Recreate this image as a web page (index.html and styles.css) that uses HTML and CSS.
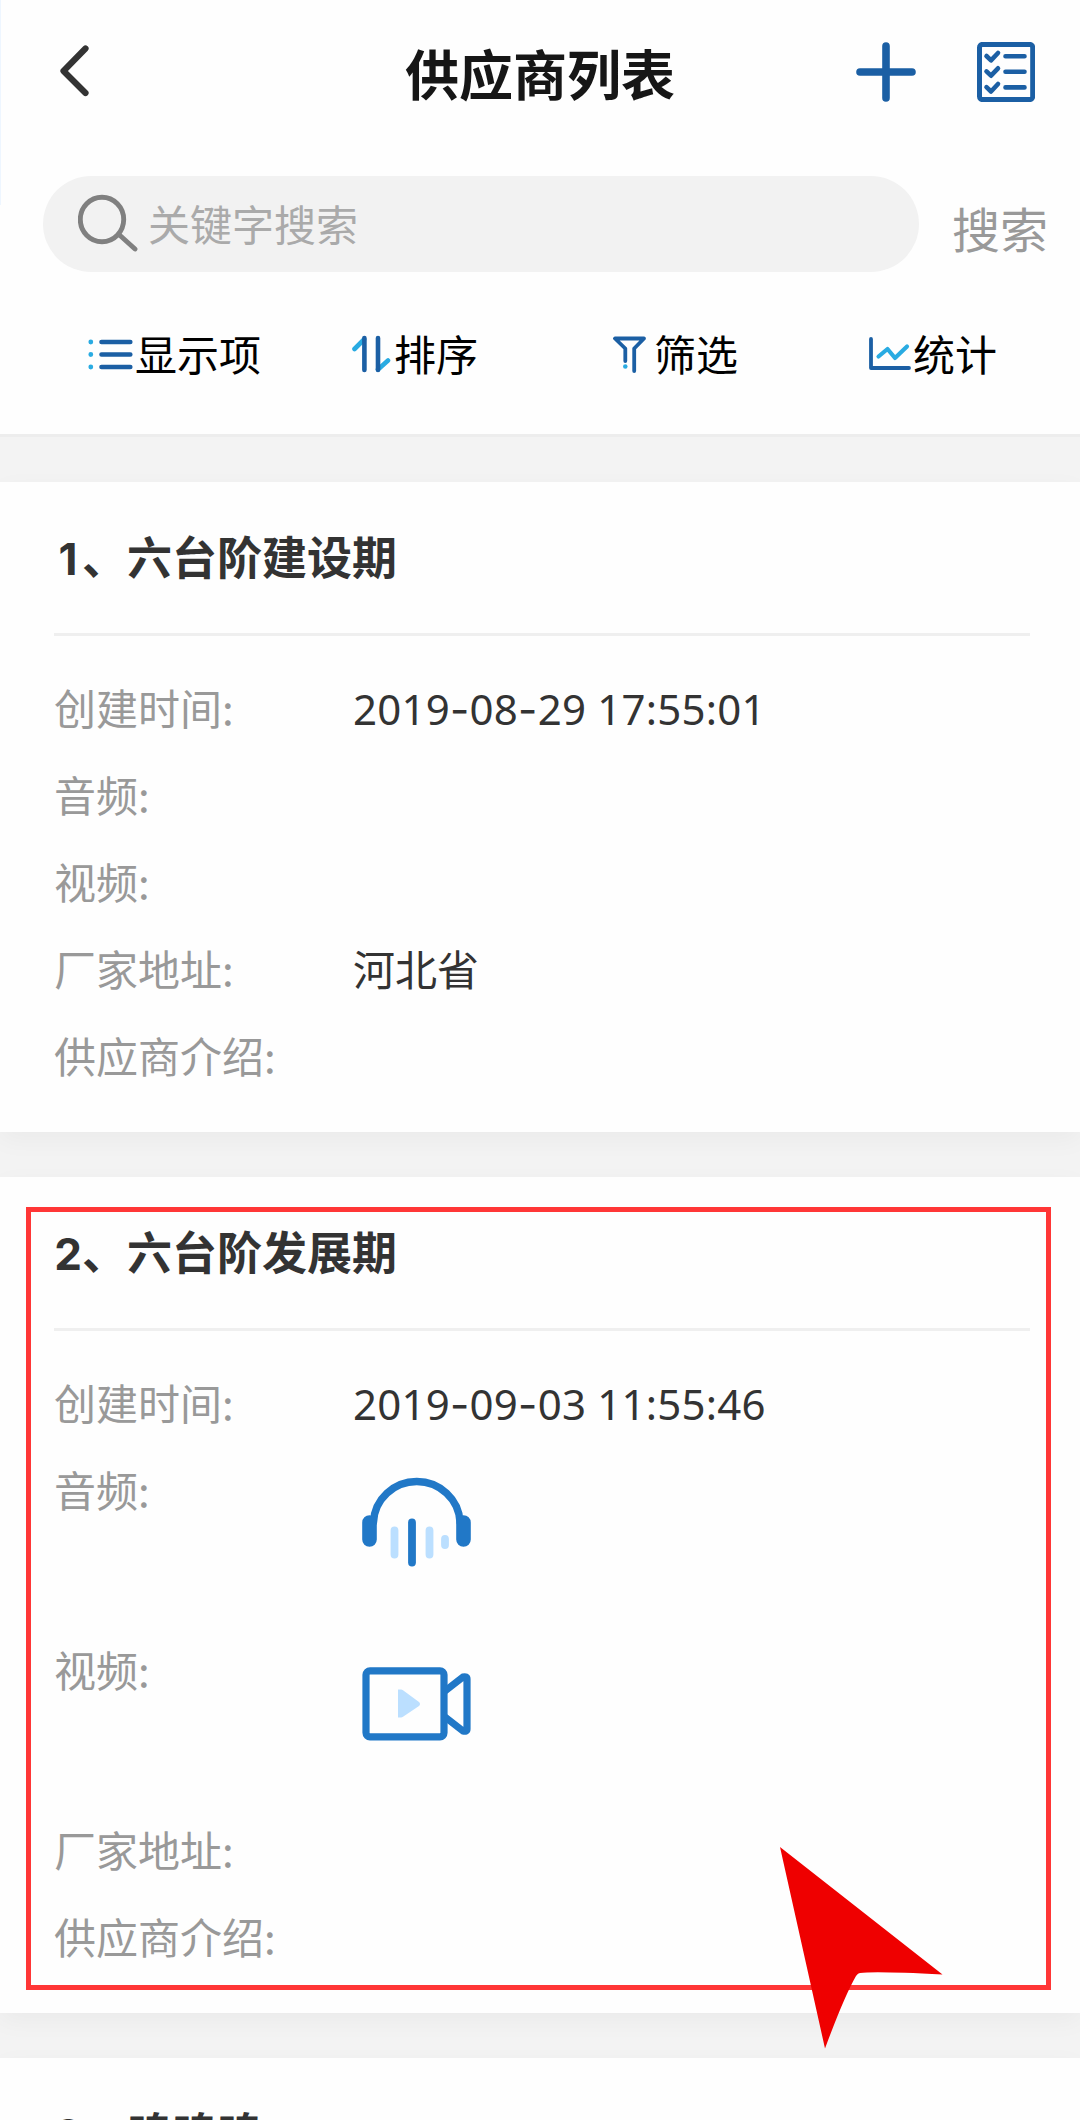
FILE: index.html
```html
<!DOCTYPE html>
<html lang="zh-CN">
<head>
<meta charset="utf-8">
<title>供应商列表</title>
<link rel="stylesheet" href="styles.css">
</head>
<body>
<div class="app">
  <header class="top">
    <div class="navbar">
      <svg class="icon-back" viewBox="0 0 30 52" fill="none" stroke="#333" stroke-width="6.2" stroke-linecap="round" stroke-linejoin="round"><path d="M26.500 3.500 4.500 26 26.500 48"/></svg>
      <h1 class="title">供应商列表</h1>
      <div class="actions">
        <svg class="icon-add" viewBox="0 0 60 60" stroke="#1b5fa4" stroke-width="7.6" stroke-linecap="round"><path d="M4 30H56M30 4V56"/></svg>
        <svg class="icon-list" viewBox="0 0 58 60" fill="none" stroke="#1b5fa4" stroke-width="4.600" stroke-linecap="round" stroke-linejoin="round"><rect x="2.500" y="2.400" width="53.2" height="55.2" rx="3" stroke-width="5"/><path d="M28.500 14.300H47.500M28.500 29.700H47.500M28.500 45.400H47.500"/><path d="M9.500 14 14 18.300 21 11M9.500 29.400 14 33.700 21 26.300M9.500 45.200 14 49.500 21 42"/></svg>
      </div>
    </div>
    <div class="search">
      <div class="search-box">
        <svg class="icon-search" viewBox="0 0 60 60" fill="none" stroke="#808080" stroke-width="4.900" stroke-linecap="round"><ellipse cx="24" cy="25.500" rx="21.700" ry="22.200"/><path d="M41.500 41 57 55"/></svg>
        <span class="placeholder">关键字搜索</span>
      </div>
      <span class="search-btn">搜索</span>
    </div>
    <nav class="tabs">
      <div class="tab tab-fields">
        <svg width="45" height="38" viewBox="0 0 45 38" stroke-width="4.600" stroke-linecap="round"><path stroke="#1b5fa4" d="M13.500 7H42.300M13.500 19.500H42.300M13.500 32H42.300"/><path stroke="#29abe2" stroke-width="4.800" d="M2.800 7h.01M2.800 19.500h.01M2.800 32h.01"/></svg>
        <span>显示项</span>
      </div>
      <div class="tab tab-sort">
        <svg width="39" height="38" viewBox="0 0 39 38" fill="none" stroke-width="4.600" stroke-linecap="round"><path stroke="#29abe2" d="M2.500 14 12 4.500M26 34.500 36 25.500"/><path stroke="#1b5fa4" d="M12.400 3V35M26 3V35"/></svg>
        <span>排序</span>
      </div>
      <div class="tab tab-filter">
        <svg width="34" height="38" viewBox="0 0 34 38" fill="none" stroke-width="3.800" stroke-linecap="round" stroke-linejoin="round"><path stroke="#1b5fa4" d="M12.300 26V13.500L2 3.500H31L21.200 13.500V36"/><path stroke="#29abe2" stroke-width="4.500" d="M12.300 31.500h.01"/></svg>
        <span>筛选</span>
      </div>
      <div class="tab tab-stats">
        <svg width="43" height="38" viewBox="0 0 43 38" fill="none" stroke-width="3.800" stroke-linecap="round" stroke-linejoin="round"><path stroke="#1b5fa4" d="M2 4V33H40"/><path stroke="#29abe2" stroke-width="4.200" d="M9.500 21.500 18.500 14 26 23 38 11.500"/></svg>
        <span>统计</span>
      </div>
    </nav>
  </header>

  <main class="list">
    <section class="card">
      <h2 class="card-title"><span class="num">1</span>、六台阶建设期</h2>
      <dl class="fields">
        <div class="row"><dt>创建时间:</dt><dd class="date">2019<span class="dash">-</span>08<span class="dash">-</span>29 17:55:01</dd></div>
        <div class="row"><dt>音频:</dt><dd></dd></div>
        <div class="row"><dt>视频:</dt><dd></dd></div>
        <div class="row"><dt>厂家地址:</dt><dd>河北省</dd></div>
        <div class="row"><dt>供应商介绍:</dt><dd></dd></div>
      </dl>
    </section>

    <section class="card card-marked">
      <h2 class="card-title"><span class="num">2</span>、六台阶发展期</h2>
      <dl class="fields">
        <div class="row"><dt>创建时间:</dt><dd class="date">2019<span class="dash">-</span>09<span class="dash">-</span>03 11:55:46</dd></div>
        <div class="row row-media"><dt>音频:</dt><dd>
          <svg class="media media-audio" viewBox="0 0 110 92" fill="none" stroke="#2178c7" stroke-linecap="round"><path stroke-width="7.400" d="M11.500 46A43.300 42.500 0 0 1 98 46"/><path stroke-width="14.600" d="M7.500 46.500V63.500M101.500 46.500V63.500"/><path stroke-width="7.800" d="M50 46.500V86.500"/><path stroke="#bbdfff" stroke-width="7.800" d="M32.500 54.500V78.500M67.500 54.500V78.500M83 63V69"/></svg>
        </dd></div>
        <div class="row row-media"><dt>视频:</dt><dd>
          <svg class="media media-video" viewBox="0 0 110 74" fill="none" stroke="#2178c7" stroke-width="7.200" stroke-linejoin="round"><rect x="4" y="3.800" width="78" height="66" rx="4"/><path d="M83 24 101 10Q105 9 105 12V62Q105 65 101 64L83 50"/><path fill="#bbdfff" stroke="none" d="M36 22.500h3q1 0 2 .8L57 35q2 2 0 4L41 49.800q-1 .7-2 .7h-3z"/></svg>
        </dd></div>
        <div class="row"><dt>厂家地址:</dt><dd></dd></div>
        <div class="row"><dt>供应商介绍:</dt><dd></dd></div>
      </dl>
      <div class="mark"></div>
      <svg class="pointer" viewBox="0 0 164 203" fill="#ef0000"><path d="M0 0 162.500 127.500Q95 124 80 126Q78 126 76 129Q64 150 45 201.500Z"/></svg>
    </section>

    <section class="card">
      <h2 class="card-title"><span class="num">3</span>、呜呜呜</h2>
    </section>
  </main>
</div>
</body>
</html>
```
FILE: styles.css
```css
* { box-sizing: border-box; margin: 0; padding: 0; }

body {
  width: 1080px;
  height: 2120px;
  overflow: hidden;
  background: #f3f3f3;
  font-family: "Noto Sans CJK SC", sans-serif;
  font-size: 42px;
  color: #333;
}

svg { display: block; flex: none; }

.app { height: 2120px; overflow: hidden; }

.top {
  height: 434px;
  background: linear-gradient(#eef6ff, #eef6ff) 0 0 / 1px 205px no-repeat #fefefe;
  box-shadow: 0 3px 0 #ededed;
}

.navbar {
  display: grid;
  grid-template-columns: 1fr auto 1fr;
  align-items: center;
  height: 144px;
  padding: 0 45px 0 59px;
}
.icon-back { width: 30px; height: 52px; margin-bottom: 3px; }
.title {
  font-size: 54px;
  line-height: 80px;
  font-weight: 700;
  color: #161616;
  transform: translate(-7px, 1px);
}
.actions { display: flex; justify-content: flex-end; gap: 61px; }
.icon-add { width: 60px; height: 60px; }
.icon-list { width: 58px; height: 60px; }

.search { display: flex; align-items: center; padding: 32px 0 0 43px; }
.search-box {
  display: flex;
  align-items: center;
  width: 876px;
  height: 96px;
  padding-left: 35px;
  border-radius: 48px;
  background: #f2f2f2;
}
.icon-search { width: 60px; height: 60px; }
.placeholder { padding: 0 0 3px 10px; color: #aaa; line-height: 60px; }
.search-btn { padding: 5px 0 0 33px; font-size: 48px; line-height: 60px; color: #999; }

.tabs { display: flex; padding: 51px 0 0 88px; line-height: 60px; color: #000; }
.tab { display: flex; align-items: center; }
.tab svg { margin-top: 2px; }
.tab-fields { width: 264px; gap: 2px; }
.tab-sort { width: 261px; gap: 3px; }
.tab-filter { width: 256px; gap: 7px; }
.tab-stats { gap: 1px; }

.list { display: flex; flex-direction: column; gap: 45px; padding-top: 48px; }

.card {
  position: relative;
  flex: none;
  padding: 0 50px 32px 54px;
  background: #fefefe;
  box-shadow: 0 8px 24px rgba(0, 0, 0, .04);
}
.card-title {
  height: 154px;
  border-bottom: 3px solid #efefef;
  font-size: 45px;
  line-height: 148px;
  font-weight: 700;
}
.num {
  display: inline-block;
  width: 28px;
  font-family: Inter, sans-serif;
  font-size: 44px;
  line-height: 1;
  text-align: center;
}

.fields { padding-top: 29px; }
.row { display: flex; min-height: 87px; line-height: 83px; }
.row dt { width: 299px; color: #999; }
.row-media { height: 180px; }
.date {
  font-family: "Noto Sans", sans-serif;
  line-height: 87px;
  letter-spacing: .23px;
}
.dash { font-family: Inter, sans-serif; line-height: 1; }
.media { margin-left: 9px; }
.media-audio { width: 110px; height: 92px; margin-top: 29px; }
.media-video { width: 110px; height: 74px; margin-top: 40px; }

.mark {
  position: absolute;
  left: 26px;
  top: 30px;
  width: 1025px;
  height: 783px;
  border: 5px solid #ff3636;
}
.pointer { position: absolute; left: 780px; top: 670px; width: 164px; height: 203px; z-index: 1; }
```
